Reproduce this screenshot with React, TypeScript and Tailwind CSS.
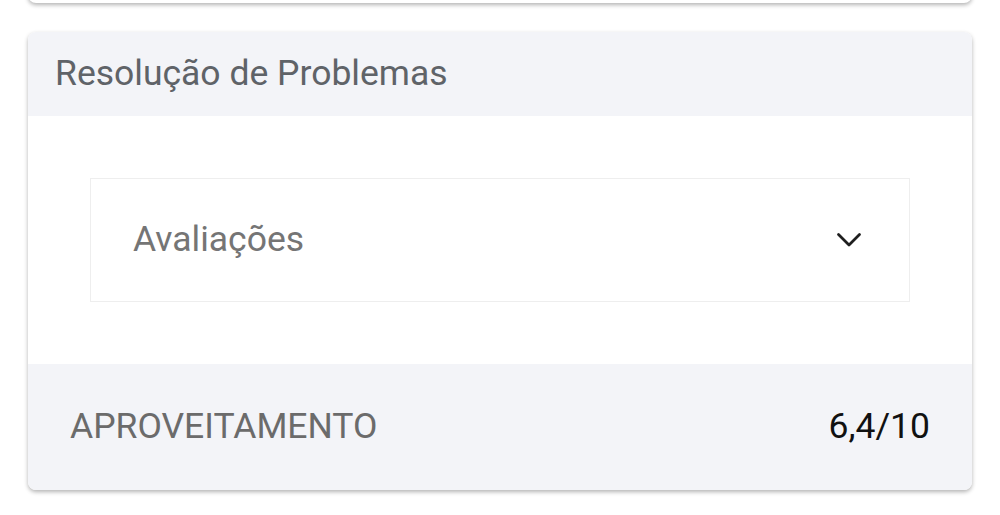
import React from "react";

const Chevron = () => (
  <svg width="26" height="16" viewBox="0 0 26 16" fill="none" className="text-[#1f1f1f]">
    <path d="M2.5 2.5 L13 13 L23.5 2.5" stroke="currentColor" strokeWidth="2.8" strokeLinecap="round" strokeLinejoin="round" />
  </svg>
);

const App = () => {
  return (
    <div className="min-h-[515px] bg-white font-['Roboto',sans-serif] overflow-hidden">
      {/* card above, cut off */}
      <div className="mx-[28px] -mt-[20px] h-[23px] rounded-b-lg bg-white shadow-[0_2px_4px_rgba(0,0,0,0.3)]" />

      <div className="mx-[28px] mt-[29px] overflow-hidden rounded-lg bg-white shadow-[0_2px_4px_rgba(0,0,0,0.3)]">
        <div className="flex h-[84px] items-center bg-[#f3f4f8] px-[27px]">
          <h2 className="text-[35.5px] leading-none text-[#5f6368]">Resolução de Problemas</h2>
        </div>

        <div className="px-[62px] py-[62px]">
          <div className="flex h-[124px] items-center justify-between border border-[#eeeeee] pl-[42px] pr-[47px]">
            <span className="text-[35.5px] leading-none text-[#757575]">Avaliações</span>
            <Chevron />
          </div>
        </div>

        <div className="flex h-[126px] items-center justify-between bg-[#f3f4f8] pl-[42px] pr-[42px]">
          <span className="text-[35.5px] leading-none text-[#6b6b6b]">APROVEITAMENTO</span>
          <span className="text-[35.5px] leading-none text-[#111111]">6,4/10</span>
        </div>
      </div>
    </div>
  );
};

export default App;
